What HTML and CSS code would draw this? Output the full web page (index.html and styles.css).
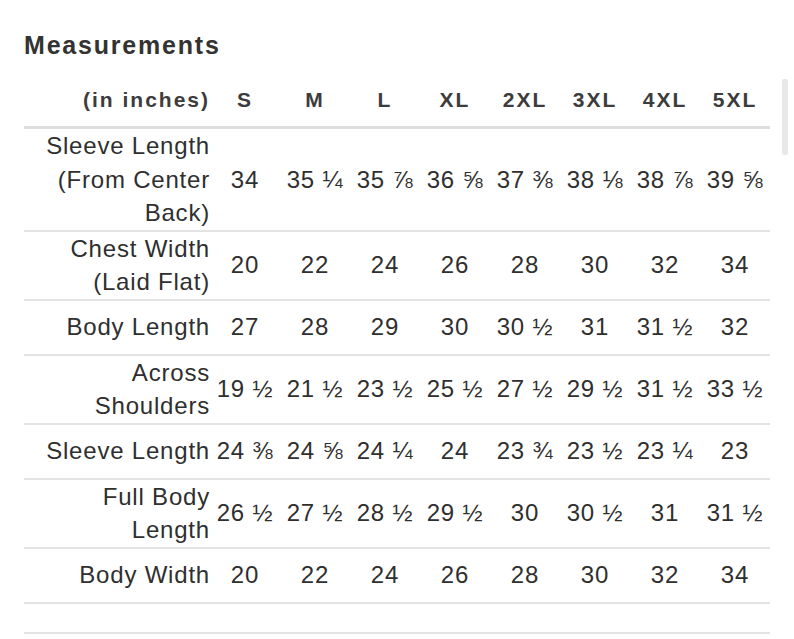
FILE: index.html
```html
<!DOCTYPE html>
<html lang="en">
<head>
<meta charset="utf-8">
<title>Measurements</title>
<link rel="stylesheet" href="styles.css">
</head>
<body>
<div class="panel">
  <h2 class="title">Measurements</h2>
  <table class="chart">
    <thead>
      <tr>
        <th class="label">(in inches)</th>
        <th>S</th><th>M</th><th>L</th><th>XL</th><th>2XL</th><th>3XL</th><th>4XL</th><th>5XL</th>
      </tr>
    </thead>
    <tbody>
      <tr>
        <td class="label">Sleeve Length<br>(From Center<br>Back)</td>
        <td>34</td><td>35 ¼</td><td>35 ⅞</td><td>36 ⅝</td><td>37 ⅜</td><td>38 ⅛</td><td>38 ⅞</td><td>39 ⅝</td>
      </tr>
      <tr>
        <td class="label">Chest Width<br>(Laid Flat)</td>
        <td>20</td><td>22</td><td>24</td><td>26</td><td>28</td><td>30</td><td>32</td><td>34</td>
      </tr>
      <tr>
        <td class="label">Body Length</td>
        <td>27</td><td>28</td><td>29</td><td>30</td><td>30 ½</td><td>31</td><td>31 ½</td><td>32</td>
      </tr>
      <tr>
        <td class="label">Across<br>Shoulders</td>
        <td>19 ½</td><td>21 ½</td><td>23 ½</td><td>25 ½</td><td>27 ½</td><td>29 ½</td><td>31 ½</td><td>33 ½</td>
      </tr>
      <tr>
        <td class="label">Sleeve Length</td>
        <td>24 ⅜</td><td>24 ⅝</td><td>24 ¼</td><td>24</td><td>23 ¾</td><td>23 ½</td><td>23 ¼</td><td>23</td>
      </tr>
      <tr>
        <td class="label">Full Body<br>Length</td>
        <td>26 ½</td><td>27 ½</td><td>28 ½</td><td>29 ½</td><td>30</td><td>30 ½</td><td>31</td><td>31 ½</td>
      </tr>
      <tr>
        <td class="label">Body Width</td>
        <td>20</td><td>22</td><td>24</td><td>26</td><td>28</td><td>30</td><td>32</td><td>34</td>
      </tr>
      <tr class="spacer">
        <td class="label"></td>
        <td></td><td></td><td></td><td></td><td></td><td></td><td></td><td></td>
      </tr>
    </tbody>
  </table>
  <div class="scrollbar"></div>
</div>
</body>
</html>
```

FILE: styles.css
```css
html, body {
  margin: 0;
  padding: 0;
  background: #ffffff;
}

body {
  font-family: "Liberation Sans", Arial, sans-serif;
  color: #333333;
}

.panel {
  position: relative;
  padding: 30px 0 0 24px;
  width: 746px;
}

.title {
  margin: 0 0 13px 0;
  font-size: 25px;
  line-height: 30px;
  font-weight: bold;
  letter-spacing: 1.8px;
  color: #333333;
}

.chart {
  border-collapse: collapse;
  table-layout: fixed;
  width: 746px;
}

.chart th,
.chart td {
  width: 70px;
  padding: 0;
  text-align: center;
  vertical-align: middle;
}

.chart th.label,
.chart td.label {
  width: 186px;
  text-align: right;
}

.chart th {
  height: 53px;
  font-size: 21px;
  line-height: 33px;
  font-weight: bold;
  letter-spacing: 2px;
  color: #3c3c3c;
  border-bottom: 3px solid #dedede;
}

.chart td {
  height: 53px;
  font-size: 24px;
  line-height: 33.5px;
  letter-spacing: 0.8px;
  color: #2f2f2f;
  border-bottom: 2px solid #e3e3e3;
}

.chart tr.spacer td {
  height: 28px;
}

.scrollbar {
  position: absolute;
  left: 782px;
  top: 79px;
  width: 6px;
  height: 76px;
  background: #e8e8e8;
  border-radius: 2px;
}
```
